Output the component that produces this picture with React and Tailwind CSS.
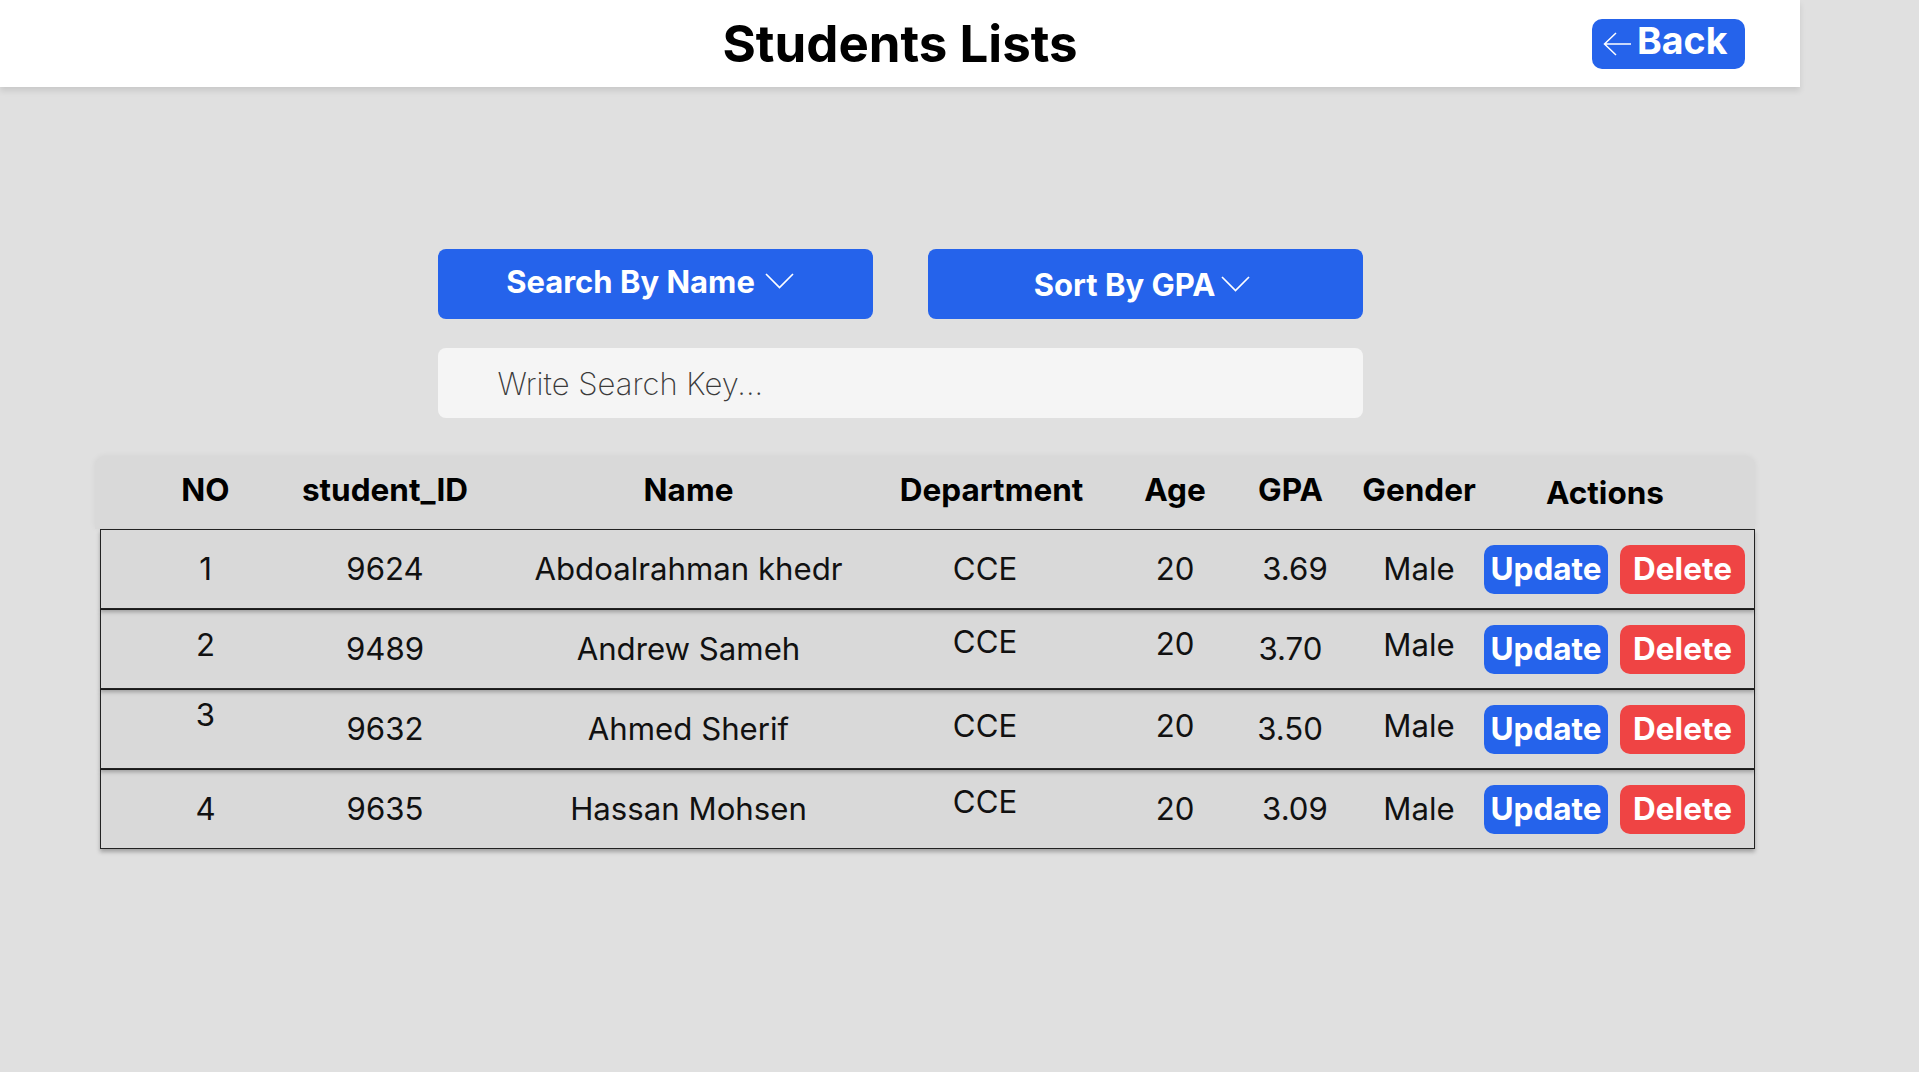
import React from "react";

const GRID = "grid grid-cols-[194px_241px_302px_243px_152px_122px_161px_238px]";

function Chevron() {
  return (
    <svg width="29" height="16" viewBox="0 0 29 16" fill="none" className="shrink-0">
      <path d="M1 1L14.5 14.5L28 1" stroke="white" strokeWidth="1.7" />
    </svg>
  );
}

const rows = [
  {
    no: "1", noC: "", id: "9624", name: "Abdoalrahman khedr", dep: "", age: "", gpa: "3.69", gpaC: "pl-[2px]", male: "",
  },
  {
    no: "2", noC: "mb-[8px]", id: "9489", name: "Andrew Sameh", dep: "mb-[14px]", age: "mb-[10px]", gpa: "3.70", gpaC: "pr-[7px]", male: "mb-[8px]",
  },
  {
    no: "3", noC: "mb-[28px]", id: "9632", name: "Ahmed Sherif", dep: "mb-[6px]", age: "mb-[6px]", gpa: "3.50", gpaC: "pr-[8px]", male: "mb-[6px]",
  },
  {
    no: "4", noC: "", id: "9635", name: "Hassan Mohsen", dep: "mb-[14px]", age: "", gpa: "3.09", gpaC: "pl-[2px]", male: "",
  },
];

const zs = ["z-[4]", "z-[3]", "z-[2]", "z-[1]"];

export default function App() {
  return (
    <div className="min-h-[1072px] w-full bg-[#e0e0e0] font-[Inter,'Liberation_Sans',sans-serif] text-[#111]">
      {/* Top bar */}
      <header className="w-[1800px] h-[87px] bg-white shadow-[0_4px_6px_rgba(0,0,0,0.10)] grid grid-cols-[1fr_auto_1fr] items-center">
        <div />
        <h1 className="text-[51px] font-bold leading-none text-black">Students Lists</h1>
        <div className="flex justify-end pr-[55px]">
          <button className="w-[153px] h-[50px] bg-[#2563eb] rounded-[10px] flex items-center pl-[11px] gap-[6px] text-white">
            <svg width="28" height="24" viewBox="0 0 28 24" fill="none" className="shrink-0">
              <path d="M28 12H1.5M13 1L1.5 12L13 23" stroke="white" strokeWidth="1.5" />
            </svg>
            <span className="text-[37.5px] font-bold leading-none mb-[5px]">Back</span>
          </button>
        </div>
      </header>

      {/* Controls */}
      <div className="w-[1800px] flex flex-col items-center pt-[162px]">
        <div className="flex gap-[55px]">
          <button className="w-[435px] h-[70px] bg-[#2563eb] rounded-[8px] flex items-center justify-center text-white">
            <span className="flex items-center gap-[10px] mb-[6px] mr-[10px]">
              <span className="text-[31px] font-bold leading-none">Search By Name</span>
              <Chevron />
            </span>
          </button>
          <button className="w-[435px] h-[70px] bg-[#2563eb] rounded-[8px] flex items-center justify-center text-white">
            <span className="flex items-center gap-[6px] mr-[6px]">
              <span className="text-[31px] font-bold leading-none">Sort By GPA</span>
              <Chevron />
            </span>
          </button>
        </div>
        <input
          type="text"
          placeholder="Write Search Key..."
          className="mt-[29px] w-[925px] h-[70px] bg-[#f5f5f5] rounded-[8px] pl-[60px] text-[31px] font-extralight outline-none placeholder:text-[#3a3a3a] placeholder:font-extralight"
        />
      </div>

      {/* Table */}
      <div className="ml-[95px] mt-[39px] w-[1660px]">
        <div className={`${GRID} h-[72px] bg-[#d9d9d9] rounded-t-[9px] pl-[6px] pr-[1px] items-center text-[31.5px] font-bold text-black shadow-[0_-1px_6px_rgba(0,0,0,0.06)]`}>
          <div className="flex justify-center pl-[15px]"><span className="mb-[6px]">NO</span></div>
          <div className="flex justify-center pr-[61px]"><span className="mb-[6px] whitespace-nowrap">student_ID</span></div>
          <div className="flex justify-center pl-[3px]"><span className="mb-[6px]">Name</span></div>
          <div className="flex justify-center pl-[64px]"><span className="mb-[6px]">Department</span></div>
          <div className="flex justify-center pl-[36px]"><span className="mb-[6px]">Age</span></div>
          <div className="flex justify-center pr-[7px]"><span className="mb-[6px]">GPA</span></div>
          <div className="flex justify-center pr-[33px]"><span className="mb-[6px]">Gender</span></div>
          <div className="flex justify-center pr-[60px]"><span>Actions</span></div>
        </div>

        {rows.map((r, i) => (
          <div
            key={r.no}
            className={`${GRID} ${zs[i]} relative ml-[5px] w-[1655px] h-[80px] border border-[#222] bg-[#d9d9d9] items-center text-[31.2px] shadow-[0_3px_4px_rgba(0,0,0,0.28)]`}
          >
            <div className="flex justify-center pl-[15px]"><span className={r.noC}>{r.no}</span></div>
            <div className="flex justify-center pr-[61px]"><span>{r.id}</span></div>
            <div className="flex justify-center pl-[3px]"><span className="whitespace-nowrap">{r.name}</span></div>
            <div className="flex justify-center pl-[51px]"><span className={r.dep}>CCE</span></div>
            <div className="flex justify-center pl-[36px]"><span className={r.age}>20</span></div>
            <div className={`flex justify-center ${r.gpaC}`}><span>{r.gpa}</span></div>
            <div className="flex justify-center pr-[33px]"><span className={r.male}>Male</span></div>
            <div className="flex justify-end pr-[9px] gap-[12px]">
              <button className="shrink-0 w-[124px] h-[49px] bg-[#2563eb] rounded-[10px] text-white text-[31.5px] font-bold leading-none flex items-center justify-center">Update</button>
              <button className="shrink-0 w-[125px] h-[49px] bg-[#ef4444] rounded-[10px] text-white text-[31.5px] font-bold leading-none flex items-center justify-center">Delete</button>
            </div>
          </div>
        ))}
      </div>
    </div>
  );
}
